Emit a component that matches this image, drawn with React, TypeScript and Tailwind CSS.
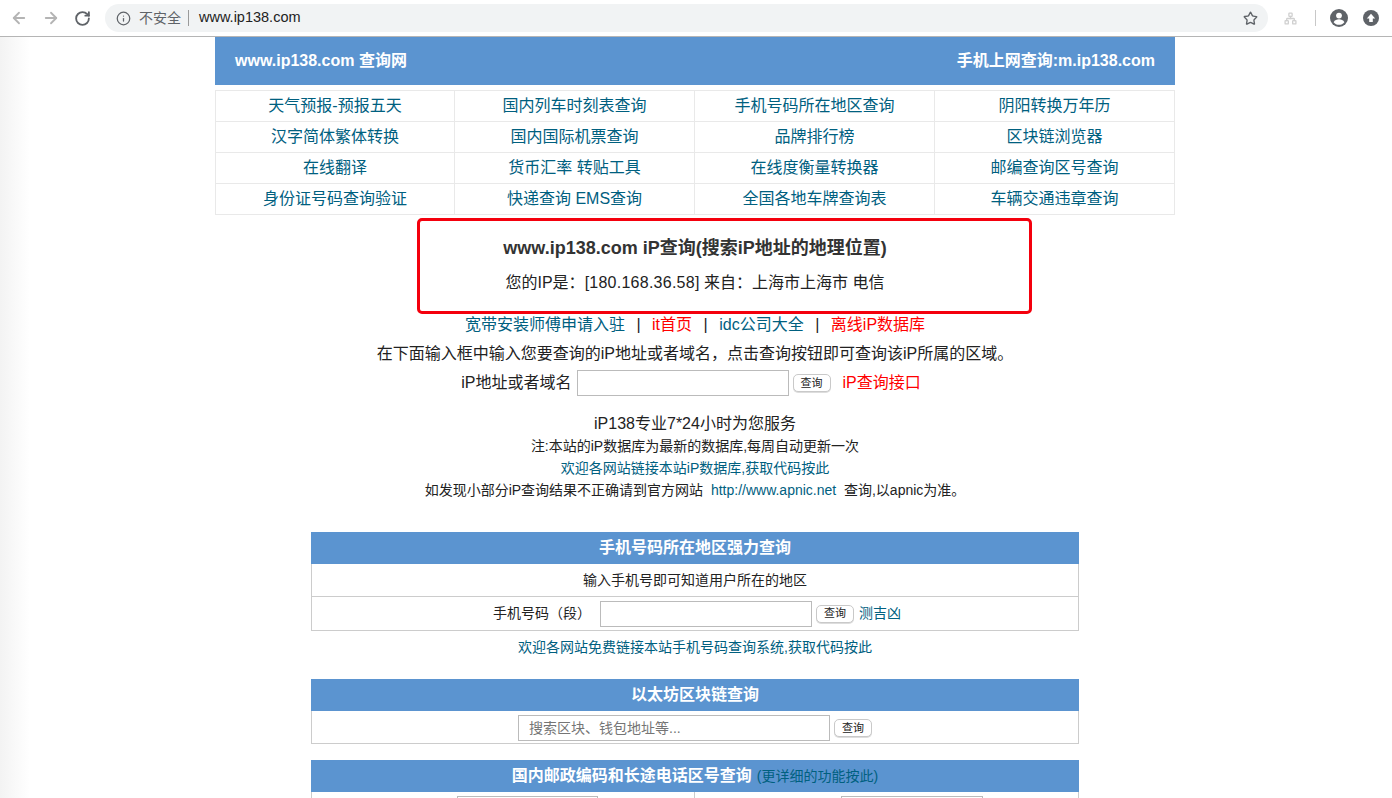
import React from 'react';
import { ArrowLeft, ArrowRight, RotateCw, Info, Star, Network } from 'lucide-react';

const FONT = "font-['Liberation_Sans','Noto_Sans_CJK_SC',sans-serif]";

const links = [
    ['天气预报-预报五天', '国内列车时刻表查询', '手机号码所在地区查询', '阴阳转换万年历'],
    ['汉字简体繁体转换', '国内国际机票查询', '品牌排行榜', '区块链浏览器'],
    ['在线翻译', '货币汇率 转贴工具', '在线度衡量转换器', '邮编查询区号查询'],
    ['身份证号码查询验证', '快递查询 EMS查询', '全国各地车牌查询表', '车辆交通违章查询'],
];

const QueryButton: React.FC = () => (
    <button className="h-[18px] w-[38px] rounded-[5px] border border-[#c9c9c9] bg-white text-[11px] leading-none text-[#222] shadow-[0_1px_0_#ddd]">
        查询
    </button>
);

const Toolbar: React.FC = () => (
    <div className="flex h-[37px] items-center border-b border-[#b5b5b5] bg-white pl-[10px]">
        <ArrowLeft size={18} className="shrink-0 text-[#b4b4b4]" strokeWidth={2.4} />
        <ArrowRight size={18} className="ml-[14px] shrink-0 text-[#b4b4b4]" strokeWidth={2.4} />
        <RotateCw size={17} className="ml-[14px] shrink-0 text-[#5f6368]" strokeWidth={2.6} />
        <div className="ml-[14px] flex h-[28px] w-[1163px] shrink-0 items-center rounded-full bg-[#f1f3f4] pl-[11px] pr-[10px]">
            <Info size={15} className="text-[#5f6368]" />
            <span className="ml-[8px] text-[14px] text-[#5f6368]">不安全</span>
            <span className="ml-[7px] h-[16px] w-px bg-[#9a9a9a]" />
            <span className="ml-[10px] text-[14.5px] text-[#222]">www.ip138.com</span>
            <Star size={15} className="ml-auto text-[#5f6368]" strokeWidth={2.2} />
        </div>
        <Network size={13} className="ml-[16px] shrink-0 text-[#d0d0d0]" strokeWidth={2.4} />
        <span className="ml-[18px] h-[16px] w-px shrink-0 bg-[#c8c8c8]" />
        {/* profile */}
        <svg width="18" height="18" viewBox="0 0 18 18" className="ml-[14px] shrink-0">
            <circle cx="9" cy="9" r="9" fill="#5f6368" />
            <circle cx="9" cy="6.6" r="2.9" fill="#fff" />
            <path d="M3.6 13.2c1-2 3.4-2.9 5.4-2.9s4.4.9 5.4 2.9C13.200 14.800 11.200 15.800 9 15.800s-4.200-1-5.400-2.600z" fill="#fff" />
        </svg>
        <svg width="16" height="16" viewBox="0 0 16 16" className="ml-[15px] shrink-0">
            <circle cx="8" cy="8" r="8" fill="#5f6368" />
            <path d="M8 3.800 12.200 8.400H9.800V12H6.200V8.400H3.800z" fill="#fff" />
        </svg>
    </div>
);

const SectionHead: React.FC<{ children: React.ReactNode }> = ({ children }) => (
    <div className="flex h-[32px] items-center justify-center bg-[#5b94d0] text-[16px] font-bold text-white">{children}</div>
);

export default function App() {
    return (
        <div className={`relative h-[798px] overflow-hidden bg-white text-[#222] ${FONT}`}>
            <Toolbar />
            <div className="absolute left-0 top-[37px] h-[761px] w-[30px] bg-gradient-to-r from-[#f3f3f3] to-white" />
            <main className="relative ml-[215px] w-[960px]">
                <header className="flex h-[48px] items-center justify-between bg-[#5b94d0] px-[20px] text-[16px] font-bold text-white">
                    <span>www.ip138.com 查询网</span>
                    <span>手机上网查询:m.ip138.com</span>
                </header>

                <div className="mt-[5px] border-t border-l border-[#e9e9e9]">
                    {links.map((row, i) => (
                        <div key={i} className="grid h-[31px] grid-cols-[239px_240px_240px_240px]">
                            {row.map((t) => (
                                <div key={t} className="flex items-center justify-center border-r border-b border-[#e9e9e9] text-[16px] text-[#00607f]">
                                    {t}
                                </div>
                            ))}
                        </div>
                    ))}
                </div>

                <div className="relative mt-[3px] h-[96px] pt-[18px] text-center">
                    {/* red annotation drawn over the screenshot, not centred on the text */}
                    <div className="absolute inset-y-0 left-[202px] w-[615px] rounded-[5px] border-[3px] border-[#f4000d]" />
                    <h1 className="text-[18px] font-bold leading-[24px] text-[#333]">www.ip138.com iP查询(搜索iP地址的地理位置)</h1>
                    <p className="mt-[11px] text-[16px] leading-[24px] text-[#222]">
                        您的IP是：<span className="tracking-[0.25px]">[180.168.36.58]</span> 来自：上海市上海市 电信
                    </p>
                </div>

                <div className="flex h-[22px] items-center justify-center text-[16px]">
                    <span className="text-[#00607f]">宽带安装师傅申请入驻</span>
                    <span className="mx-[11.5px]">|</span>
                    <span className="text-[#f00]">it首页</span>
                    <span className="mx-[11.5px]">|</span>
                    <span className="text-[#00607f]">idc公司大全</span>
                    <span className="mx-[11.5px]">|</span>
                    <span className="text-[#f00]">离线iP数据库</span>
                </div>
                <p className="mt-[6px] text-center text-[16px] leading-[24px]">在下面输入框中输入您要查询的iP地址或者域名，点击查询按钮即可查询该iP所属的区域。</p>
                <div className="mt-[4px] flex h-[26px] items-center justify-center pr-[8px] text-[16px]">
                    <span>iP地址或者域名</span>
                    <input className="ml-[5px] h-[26px] w-[212px] border border-[#bbb] bg-white" />
                    <span className="ml-[4px] flex"><QueryButton /></span>
                    <span className="ml-[12px] text-[#f00]">iP查询接口</span>
                </div>

                <div className="mt-[16px] flex flex-col items-center">
                    <p className="text-[16px] leading-[23px]">iP138专业7*24小时为您服务</p>
                    <p className="text-[14px] leading-[22px]">注:本站的iP数据库为最新的数据库,每周自动更新一次</p>
                    <p className="text-[14px] leading-[22px] text-[#00607f]">欢迎各网站链接本站iP数据库,获取代码按此</p>
                    <p className="text-[14px] leading-[22px]">
                        如发现小部分iP查询结果不正确请到官方网站&nbsp; <span className="text-[#00607f]">http://www.apnic.net</span>&nbsp; 查询,以apnic为准。
                    </p>
                </div>

                <section className="mx-auto mt-[31px] w-[768px]">
                    <SectionHead>手机号码所在地区强力查询</SectionHead>
                    <div className="border-x border-b border-[#ccc]">
                        <div className="flex h-[33px] items-center justify-center border-b border-[#ccc] text-[14px]">输入手机号即可知道用户所在的地区</div>
                        <div className="flex h-[33px] items-center justify-center pl-[4px] text-[14px]">
                            <span>手机号码（段）</span>
                            <input className="ml-[9px] h-[26px] w-[212px] border border-[#bbb] bg-white" />
                            <span className="ml-[4px] flex"><QueryButton /></span>
                            <span className="ml-[5px] text-[#00607f]">测吉凶</span>
                        </div>
                    </div>
                    <p className="mt-[5px] text-center text-[14px] leading-[22px] text-[#00607f]">欢迎各网站免费链接本站手机号码查询系统,获取代码按此</p>
                </section>

                <section className="mx-auto mt-[21px] w-[768px]">
                    <SectionHead>以太坊区块链查询</SectionHead>
                    <div className="flex h-[33px] items-center justify-center border-x border-b border-[#ccc] pt-[2px] text-[14px]">
                        <input placeholder="搜索区块、钱包地址等..." className="h-[26px] w-[312px] border border-[#bbb] bg-white px-[10px] placeholder:text-[#757575]" />
                        <span className="ml-[4px] flex"><QueryButton /></span>
                    </div>
                </section>

                <section className="mx-auto mt-[16px] w-[768px]">
                    <SectionHead>
                        国内邮政编码和长途电话区号查询
                        <span className="ml-[5px] text-[14px] font-normal text-[#00607f]">(更详细的功能按此)</span>
                    </SectionHead>
                    <div className="grid h-[33px] grid-cols-[383px_1fr] border-x border-b border-[#ccc]">
                        <div className="border-r border-[#ccc] pl-[145px] pt-[4px]">
                            <input className="h-[26px] w-[141px] border border-[#bbb] bg-white" />
                        </div>
                        <div className="pl-[146px] pt-[4px]">
                            <input className="h-[26px] w-[142px] border border-[#bbb] bg-white" />
                        </div>
                    </div>
                </section>
            </main>
        </div>
    );
}
